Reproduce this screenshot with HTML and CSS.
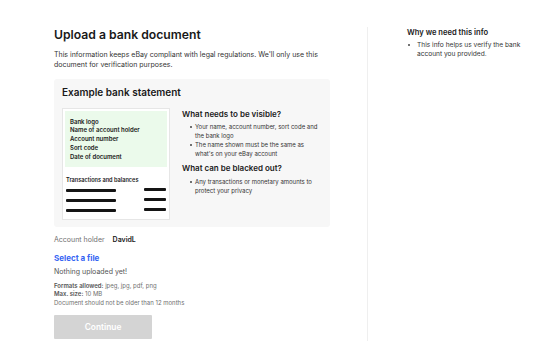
FILE: index.html
```html
<!DOCTYPE html>
<html>
<head>
<meta charset="utf-8">
<link rel="stylesheet" href="styles.css">
</head>
<body>
<div class="page">
  <main class="main">
    <h1 class="title">Upload a bank document</h1>
    <p class="intro">This information keeps eBay compliant with legal regulations. We'll only use this document for verification purposes.</p>
    <section class="example">
      <h2 class="example-title">Example bank statement</h2>
      <div class="example-body">
        <div class="statement">
          <div class="statement-top">
            <div>Bank logo</div>
            <div>Name of account holder</div>
            <div>Account number</div>
            <div>Sort code</div>
            <div>Date of document</div>
          </div>
          <div class="statement-label">Transactions and balances</div>
          <div class="tx"><span class="bar-long"></span><span class="bar-short"></span></div>
          <div class="tx"><span class="bar-long"></span><span class="bar-short"></span></div>
          <div class="tx"><span class="bar-long"></span><span class="bar-short"></span></div>
        </div>
        <div class="guide">
          <h3 class="guide-title">What needs to be visible?</h3>
          <ul class="list">
            <li>Your name, account number, sort code and the bank logo</li>
            <li>The name shown must be the same as what's on your eBay account</li>
          </ul>
          <h3 class="guide-title second">What can be blacked out?</h3>
          <ul class="list">
            <li>Any transactions or monetary amounts to protect your privacy</li>
          </ul>
        </div>
      </div>
    </section>
    <div class="holder"><span class="holder-label">Account holder</span><span class="holder-name">DavidL</span></div>
    <a class="select">Select a file</a>
    <p class="nothing">Nothing uploaded yet!</p>
    <div class="rules">
      <div><b>Formats allowed:</b> jpeg, jpg, pdf, png</div>
      <div><b>Max. size:</b> 10 MB</div>
      <div>Document should not be older than 12 months</div>
    </div>
    <button class="continue">Continue</button>
  </main>
  <aside class="side">
    <h3 class="side-title">Why we need this info</h3>
    <ul class="list side-list">
      <li>This info helps us verify the bank account you provided.</li>
    </ul>
  </aside>
</div>
</body>
</html>
```
FILE: styles.css
```css
* { box-sizing: border-box; }
html, body { margin: 0; padding: 0; background: #fff; }
body {
  font-family: Inter, "Open Sans", "Liberation Sans", sans-serif;
  color: #191919;
}
.page {
  display: flex;
  align-items: flex-start;
  padding: 27px 0 0 54px;
}
.main {
  width: 276px;
  flex: none;
}
.title {
  margin: 0;
  font-size: 12.2px;
  font-weight: 600;
  line-height: 16px;
}
.intro {
  margin: 7px 0 9px;
  font-size: 7px;
  line-height: 10px;
  color: #333;
}
.example {
  background: #f7f7f7;
  border-radius: 3px;
  padding: 7px 8px 7px;
}
.example-title {
  margin: 0 0 9px;
  font-size: 10px;
  font-weight: 600;
  line-height: 13px;
  padding-left: 0;
}
.example-body {
  display: flex;
  gap: 12px;
}
.statement {
  width: 108px;
  flex: none;
  background: #fff;
  border: 1px solid #e6e6e6;
  padding: 2px 2px 4px;
}
.statement-top {
  background: #ebfaeb;
  padding: 6.5px 5px 6px;
  font-size: 6px;
  font-weight: 600;
  line-height: 8.75px;
}
.statement-label {
  margin: 9px 0 1px 1px;
  font-size: 5.6px;
  font-weight: 600;
  line-height: 8px;
}
.tx {
  display: flex;
  justify-content: space-between;
  align-items: center;
  padding: 0 1px 0 1px;
  height: 10px;
}
.bar-long {
  width: 50px;
  height: 3px;
  background: #151515;
  border-radius: 1px;
}
.bar-short {
  width: 22px;
  height: 3px;
  margin-top: -2px;
  background: #151515;
  border-radius: 1px;
}
.guide { flex: 1; }
.guide-title {
  margin: 0 0 3px;
  font-size: 8px;
  font-weight: 600;
  line-height: 10px;
  padding-top: 1px;
}
.guide-title.second { margin-top: 4px; margin-bottom: 4px; }
.list {
  list-style: none;
  margin: 0;
  padding: 0 0 0 8px;
  font-size: 6px;
  line-height: 9px;
  color: #333;
}
.list li { display: flex; }
.list li::before {
  content: "";
  flex: none;
  width: 2px;
  height: 2px;
  border-radius: 50%;
  background: #444;
  margin: 3.5px 3px 0 0;
}
.holder {
  margin-top: 8px;
  font-size: 7px;
  line-height: 10px;
}
.holder-label { color: #707070; margin-right: 8px; }
.holder-name { font-weight: 600; }
.select {
  display: block;
  margin-top: 7.5px;
  color: #3665f3;
  font-size: 8px;
  font-weight: 700;
  line-height: 11px;
}
.nothing {
  margin: 3.5px 0 0;
  font-size: 7px;
  line-height: 10px;
  color: #555;
}
.rules {
  margin-top: 4.5px;
  font-size: 6px;
  line-height: 8.5px;
  color: #707070;
}
.rules b { font-weight: 600; color: #555; }
.continue {
  display: block;
  margin-top: 8px;
  width: 98px;
  height: 24px;
  border: none;
  border-radius: 1px;
  background: #d4d4d4;
  color: #fff;
  font-family: inherit;
  font-size: 8.4px;
  font-weight: 600;
}
.side {
  flex: none;
  width: 164px;
  margin-left: 37px;
  border-left: 1px solid #efefef;
  padding: 1px 0 0 39px;
  height: 314px;
}
.side-title {
  margin: 0 0 3px;
  font-size: 7.6px;
  font-weight: 600;
  line-height: 10px;
}
.side-list { font-size: 6.6px; line-height: 8.5px; padding-left: 1px; }
.side-list li::before { margin: 3.3px 7px 0 0; }
```
